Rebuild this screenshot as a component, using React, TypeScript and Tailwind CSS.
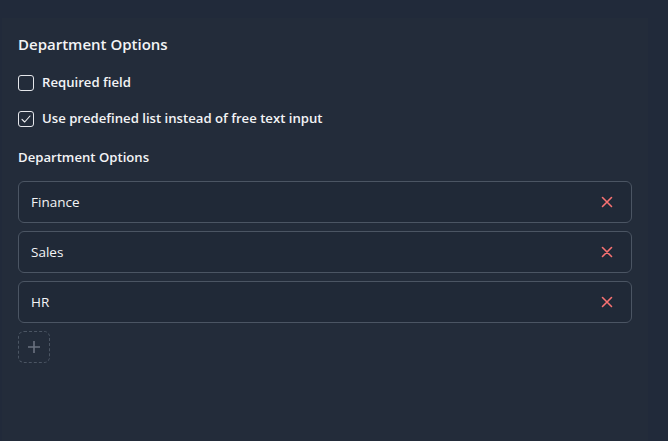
import React from "react";

function XIcon() {
  return (
    <svg width="14" height="14" viewBox="0 0 14 14" fill="none" stroke="#f87171" strokeWidth="1.6" strokeLinecap="round">
      <path d="M2.5 2.5 L11.5 11.5 M11.5 2.5 L2.5 11.5" />
    </svg>
  );
}

function Checkbox({ checked }: { checked?: boolean }) {
  return (
    <span className="w-4 h-4 rounded-[3px] border-[1.5px] border-[#e5e7eb] flex items-center justify-center shrink-0">
      {checked && (
        <svg width="12" height="12" viewBox="0 0 12 12" fill="none" stroke="#f3f4f6" strokeWidth="1.1" strokeLinecap="round" strokeLinejoin="round">
          <path d="M2 6.3 L4.7 9 L10 3" />
        </svg>
      )}
    </span>
  );
}

export default function App() {
  const items = ["Finance", "Sales", "HR"];
  return (
    <div
      className="w-[668px] h-[441px] bg-[#212a3a] pt-[18px] pl-[2px] pr-[20px] overflow-hidden"
      style={{ fontFamily: '"Open Sans", "Noto Sans", sans-serif' }}
    >
      <div className="h-full bg-[#232c3a] px-4 pt-[14px]">
        <h2 className="text-[15px] leading-6 font-semibold text-[#f3f4f6] mb-[17px]">Department Options</h2>
        <div className="flex flex-col gap-4">
          <label className="flex items-center gap-2 h-5">
            <Checkbox />
            <span className="text-[13.15px] font-semibold text-[#f3f4f6]">Required field</span>
          </label>
          <label className="flex items-center gap-2 h-5">
            <Checkbox checked />
            <span className="text-[13.15px] font-semibold text-[#f3f4f6]">Use predefined list instead of free text input</span>
          </label>
        </div>
        <div className="mt-[19px] h-5 flex items-center text-[13.15px] font-semibold text-[#f3f4f6]">Department Options</div>
        <div className="mt-[13px] flex flex-col gap-2">
          {items.map((it) => (
            <div
              key={it}
              className="h-[42px] rounded-md border border-[#4b5563] bg-[#202937] flex items-center justify-between pl-3 pr-[17px]"
            >
              <span className="text-[13.5px] text-[#f3f4f6]">{it}</span>
              <XIcon />
            </div>
          ))}
        </div>
        <div className="mt-2 w-8 h-8 rounded-md border border-dashed border-[#4b5563] flex items-center justify-center">
          <svg width="14" height="14" viewBox="0 0 14 14" fill="none" stroke="#6b7280" strokeWidth="1.6">
            <path d="M7 1 V13 M1 7 H13" />
          </svg>
        </div>
      </div>
    </div>
  );
}
